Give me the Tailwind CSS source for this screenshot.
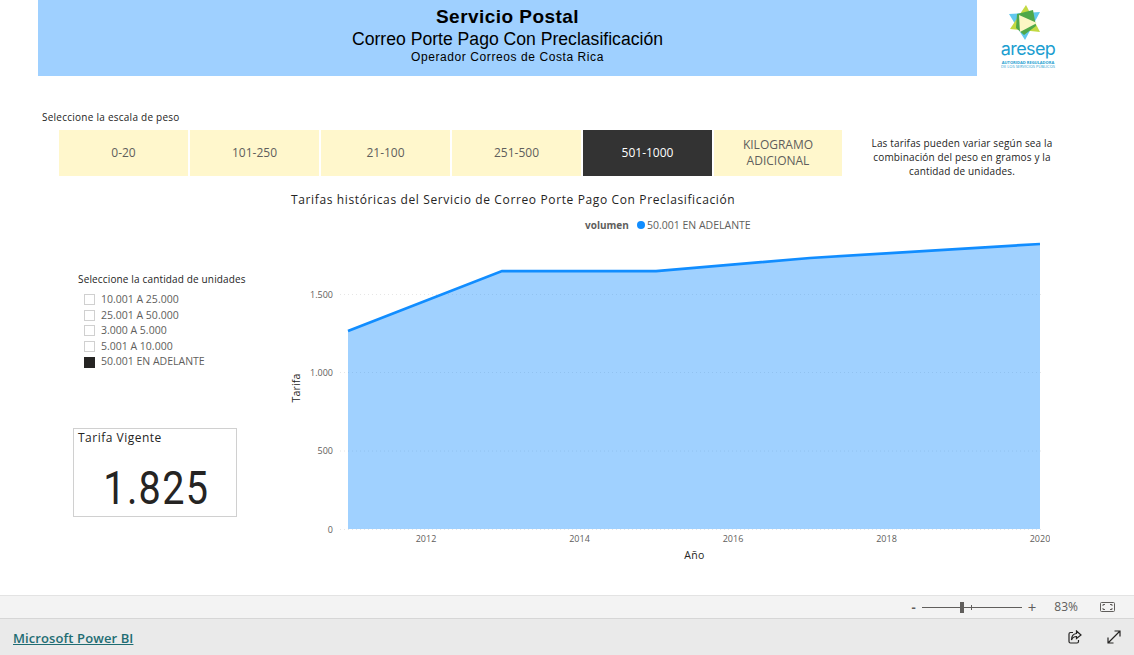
<!DOCTYPE html>
<html lang="es">
  <head>
    <meta charset="UTF-8" />
    <title>Servicio Postal</title>
    <script src="https://cdn.jsdelivr.net/npm/@tailwindcss/browser@4"></script>
  </head>
  <body class="w-[1134px] h-[655px] overflow-hidden bg-white flex flex-col font-['Open_Sans',sans-serif] text-[#252423]">
    <main class="h-[595px] flex flex-col">
      <!-- Header band -->
      <header class="flex h-[76px] shrink-0">
        <div class="ml-[38px] w-[939px] bg-[#9fd0ff] flex flex-col items-center pt-[6px] font-['Liberation_Sans',sans-serif] text-black">
          <h1 class="text-[19px] leading-[22px] font-bold tracking-[0.45px]">Servicio Postal</h1>
          <p class="text-[17.6px] leading-[22px]">Correo Porte Pago Con Preclasificación</p>
          <p class="text-[12px] leading-[15px] tracking-[0.58px]">Operador Correos de Costa Rica</p>
        </div>
        <div class="ml-[24px] w-[54px] flex flex-col items-center pt-[5px]">
          <svg class="self-start ml-[8px]" width="32" height="35" viewBox="0 0 32 35">
            <polygon points="0,9 31,7 16,35" fill="#62c8ee" />
            <polygon points="17,0 31,27 1,24" fill="#c3d942" />
            <polygon points="8,9 24,5 27,21 15,30 7,23" fill="#4fa84a" />
            <polygon points="10,10 28,18 11,27" fill="#fbf6c4" />
          </svg>
          <span class="font-['Inter',sans-serif] text-[#1c9ed0] text-[18px] leading-[18px] tracking-[-0.6px]">aresep</span>
          <span class="text-[#1c9ed0] text-[4px] leading-[5px] font-bold mt-[2px] whitespace-nowrap">AUTORIDAD REGULADORA</span>
          <span class="text-[#1c9ed0] text-[4px] leading-[4px] whitespace-nowrap">DE LOS SERVICIOS PÚBLICOS</span>
        </div>
      </header>

      <!-- Weight scale -->
      <p class="mt-[34px] ml-[42px] text-[10px] leading-[14px] tracking-[0.25px]">Seleccione la escala de peso</p>
      <section class="flex mt-[6px] ml-[59px] h-[46px]">
        <div class="flex gap-[2px] w-[783px] text-[12px] text-[#605e5c]">
          <div class="w-[129px] bg-[#fff7cc] flex items-center justify-center">0-20</div>
          <div class="w-[129px] bg-[#fff7cc] flex items-center justify-center">101-250</div>
          <div class="w-[129px] bg-[#fff7cc] flex items-center justify-center">21-100</div>
          <div class="w-[129px] bg-[#fff7cc] flex items-center justify-center">251-500</div>
          <div class="w-[129px] bg-[#333333] text-white flex items-center justify-center">501-1000</div>
          <div class="w-[128px] bg-[#fff7cc] flex items-center justify-center text-center leading-[16px]">KILOGRAMO<br />ADICIONAL</div>
        </div>
        <p class="ml-[25px] w-[190px] text-[10px] leading-[14px] text-center text-[#252423] pt-[6px] tracking-[0.15px]">Las tarifas pueden variar según sea la combinación del peso en gramos y la cantidad de unidades.</p>
      </section>

      <h2 class="mt-[15px] ml-[291px] text-[12px] leading-[18px] tracking-[0.63px] text-[#252423]">Tarifas históricas del Servicio de Correo Porte Pago Con Preclasificación</h2>

      <section class="flex mt-[6px]">
        <!-- Filters and current rate -->
        <div class="w-[290px] shrink-0 pl-[73px]">
          <p class="mt-[57px] ml-[5px] text-[10px] leading-[14px] tracking-[0.15px]">Seleccione la cantidad de unidades</p>
          <ul class="mt-[6px] ml-[11px] text-[10.5px] text-[#605e5c] flex flex-col">
            <li class="flex items-center h-[15.6px] gap-[6px]"><span class="size-[11px] border border-[#d0d0d0]"></span>10.001 A 25.000</li>
            <li class="flex items-center h-[15.6px] gap-[6px]"><span class="size-[11px] border border-[#d0d0d0]"></span>25.001 A 50.000</li>
            <li class="flex items-center h-[15.6px] gap-[6px]"><span class="size-[11px] border border-[#d0d0d0]"></span>3.000 A 5.000</li>
            <li class="flex items-center h-[15.6px] gap-[6px]"><span class="size-[11px] border border-[#d0d0d0]"></span>5.001 A 10.000</li>
            <li class="flex items-center h-[15.6px] gap-[6px]"><span class="size-[11px] bg-[#252423]"></span>50.001 EN ADELANTE</li>
          </ul>
          <div class="mt-[58px] w-[164px] h-[89px] border border-[#d0d0d0] px-[4px]">
            <p class="text-[12px] leading-[17px] tracking-[0.5px]">Tarifa Vigente</p>
            <p class="font-['Roboto',sans-serif] text-[46px] leading-[52px] mt-[16px] text-center pl-[3px] tracking-[1.5px] text-[#252423] scale-x-[0.86]">1.825</p>
          </div>
        </div>

        <!-- Area chart -->
        <svg width="760" height="355" viewBox="290 215 760 355" class="shrink-0 font-['Open_Sans',sans-serif]">
          <text x="585" y="229" font-size="10" font-weight="700" fill="#605e5c">volumen</text>
          <circle cx="641" cy="225" r="4" fill="#118dff" />
          <text x="647" y="229" font-size="10.5" fill="#605e5c">50.001 EN ADELANTE</text>

          <g stroke="#e6e6e6" stroke-width="1" stroke-dasharray="1 3">
            <line x1="340" x2="1044" y1="294.5" y2="294.5" />
            <line x1="340" x2="1044" y1="372.5" y2="372.5" />
            <line x1="340" x2="1044" y1="451" y2="451" />
            <line x1="340" x2="1044" y1="529.5" y2="529.5" />
          </g>

          <polygon points="348,331 502,271 656,271 810,258 1040,244 1040,529 348,529" fill="#118dff" fill-opacity="0.4" />
          <polyline points="348,331 502,271 656,271 810,258 1040,244" fill="none" stroke="#118dff" stroke-width="2.75" />

          <g font-size="9" fill="#605e5c" text-anchor="end">
            <text x="333" y="298">1.500</text>
            <text x="333" y="376">1.000</text>
            <text x="333" y="454">500</text>
            <text x="333" y="533">0</text>
          </g>
          <g font-size="9" fill="#605e5c" text-anchor="middle">
            <text x="426" y="542">2012</text>
            <text x="579.5" y="542">2014</text>
            <text x="733" y="542">2016</text>
            <text x="886.5" y="542">2018</text>
            <text x="1040" y="542">2020</text>
          </g>
          <text x="694.500" y="559" font-size="10.500" letter-spacing="0.3" fill="#252423" text-anchor="middle">Año</text>
          <text transform="translate(300 388) rotate(-90)" font-size="10.500" letter-spacing="0.2" fill="#252423" text-anchor="middle">Tarifa</text>
        </svg>
      </section>
    </main>

    <!-- Zoom status bar -->
    <div class="h-[24px] shrink-0 bg-[#f3f3f3] border-y border-[#d6d6d6] border-t-[#e3e3e3] flex items-center justify-end text-[#605e5c]">
      <span class="text-[13px] leading-none font-bold">-</span>
      <div class="relative w-[100px] h-px bg-[#605e5c] mx-[6px]">
        <span class="absolute left-[38px] top-[-5px] w-[4px] h-[11px] bg-[#605e5c]"></span>
        <span class="absolute left-[49px] top-[-2px] w-px h-[5px] bg-[#605e5c]"></span>
      </div>
      <span class="text-[15px] leading-none">+</span>
      <span class="ml-[18px] text-[12px]">83%</span>
      <svg class="ml-[22px] mr-[19px]" width="15" height="12" viewBox="0 0 15 12" fill="none" stroke="#605e5c">
        <rect x="0.5" y="1.5" width="14" height="9" rx="1" />
        <path d="M3 5V3.5H5M10 3.5H12V5M12 7V8.500H10M5 8.500H3V7" />
      </svg>
    </div>

    <!-- Power BI footer -->
    <footer class="h-[36px] shrink-0 bg-[#eaeaea] flex items-center justify-between pl-[13px] pr-[13px]">
      <a class="text-[13px] font-semibold underline text-[#1f6d73] tracking-[0.1px] mt-[4px]">Microsoft Power BI</a>
      <div class="flex items-center gap-[25px]">
        <svg width="14" height="14" viewBox="0 0 14 14" fill="none" stroke="#252423" stroke-width="1.200">
          <path d="M5 2.500H2.500A1.500 1.500 0 0 0 1 4v7.500A1.500 1.500 0 0 0 2.500 13H9a1.500 1.500 0 0 0 1.500-1.500V10" />
          <path d="M8.500 1L13 5L8.500 8.500V6.500C6 6.500 4.500 7.500 3.500 10C3.500 6.500 5.500 3.800 8.500 3.500Z" />
        </svg>
        <svg width="14" height="14" viewBox="0 0 14 14" fill="none" stroke="#252423" stroke-width="1.200">
          <path d="M1 13L13 1M7.500 1H13V6.500M1 7.500V13H6.500" />
        </svg>
      </div>
    </footer>
  </body>
</html>
